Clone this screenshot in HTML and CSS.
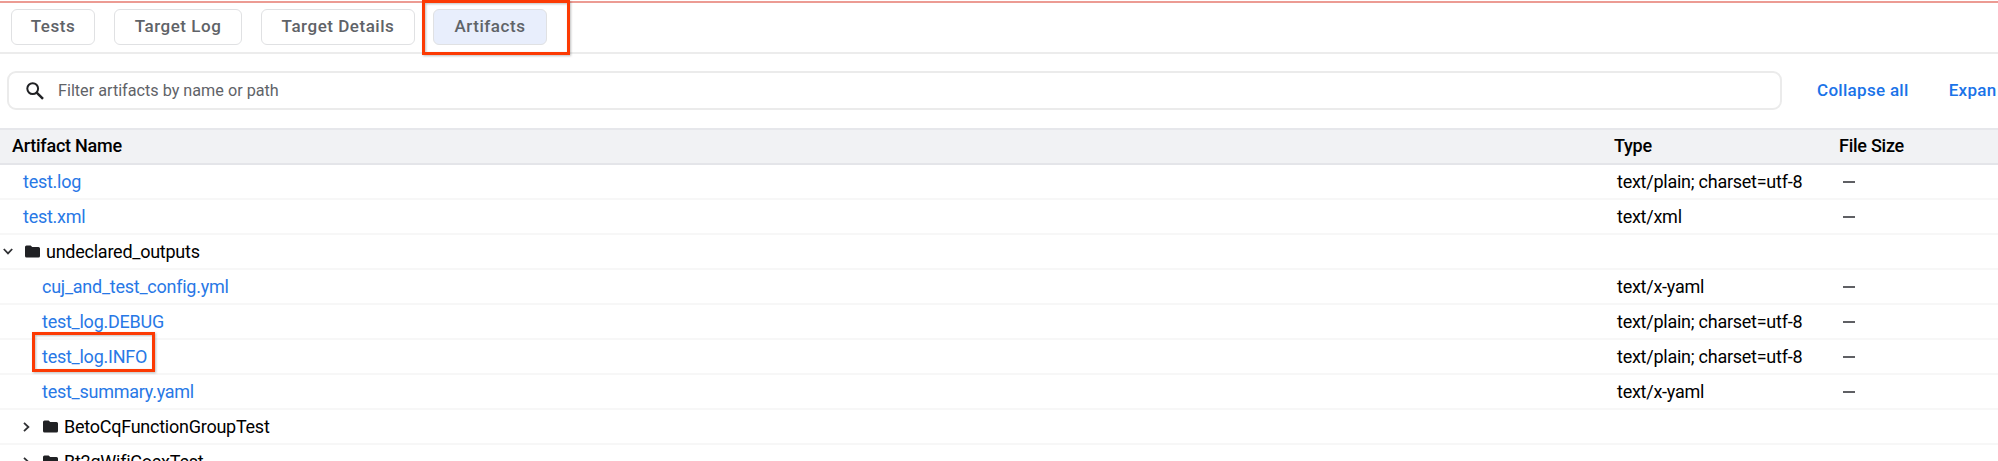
FILE: index.html
```html
<!DOCTYPE html>
<html lang="en">
<head>
<meta charset="utf-8">
<title>Artifacts</title>
<link rel="stylesheet" href="styles.css">
</head>
<body>
<svg class="defs" aria-hidden="true">
  <symbol id="folder" viewBox="0 0 15 13"><path d="M1.5 0.5H5.6L7.2 2H13.5Q15 2 15 3.5V11Q15 12.5 13.5 12.5H1.5Q0 12.5 0 11V2Q0 .5 1.5 .5Z" fill="#202124"/></symbol>
  <symbol id="down" viewBox="0 0 10 7"><path d="M.8 1L5 5.4L9.2 1" fill="none" stroke="#303134" stroke-width="1.8"/></symbol>
  <symbol id="right" viewBox="0 0 7 10"><path d="M1 .8L5.4 5L1 9.2" fill="none" stroke="#303134" stroke-width="1.8"/></symbol>
</svg>
<nav class="tabs">
  <button class="tab tests"><span>Tests</span></button>
  <button class="tab log"><span>Target Log</span></button>
  <button class="tab details"><span>Target Details</span></button>
  <button class="tab artifacts active"><span>Artifacts</span></button>
  <div class="mark mark-tab"></div>
</nav>
<div class="toolbar">
  <div class="search">
    <svg class="glass" viewBox="0 0 18 18"><circle cx="6.7" cy="6.6" r="5.4" fill="none" stroke="#202124" stroke-width="2"/><path d="M10.7 10.6L17 16.8" stroke="#202124" stroke-width="2.5"/></svg>
    <span class="placeholder">Filter artifacts by name or path</span>
  </div>
  <a class="action"><span>Collapse all</span></a>
  <a class="action expand"><span>Expan</span></a>
</div>
<main class="table">
  <div class="row head"><div class="name"><span>Artifact Name</span></div><div class="type"><span>Type</span></div><div class="size"><span>File Size</span></div></div>
  <div class="row"><div class="name file"><span>test.log</span></div><div class="type"><span>text/plain; charset=utf-8</span></div><div class="size"><i class="dash"></i></div></div>
  <div class="row"><div class="name file"><span>test.xml</span></div><div class="type"><span>text/xml</span></div><div class="size"><i class="dash"></i></div></div>
  <div class="row"><div class="name folder"><svg class="down"><use href="#down"/></svg><svg class="icon"><use href="#folder"/></svg><span>undeclared_outputs</span></div></div>
  <div class="row"><div class="name file nested"><span>cuj_and_test_config.yml</span></div><div class="type"><span>text/x-yaml</span></div><div class="size"><i class="dash"></i></div></div>
  <div class="row"><div class="name file nested"><span>test_log.DEBUG</span></div><div class="type"><span>text/plain; charset=utf-8</span></div><div class="size"><i class="dash"></i></div></div>
  <div class="row"><div class="name file nested"><span>test_log.INFO</span><div class="mark mark-file"></div></div><div class="type"><span>text/plain; charset=utf-8</span></div><div class="size"><i class="dash"></i></div></div>
  <div class="row"><div class="name file nested"><span>test_summary.yaml</span></div><div class="type"><span>text/x-yaml</span></div><div class="size"><i class="dash"></i></div></div>
  <div class="row"><div class="name folder nested"><svg class="right"><use href="#right"/></svg><svg class="icon"><use href="#folder"/></svg><span>BetoCqFunctionGroupTest</span></div></div>
  <div class="row"><div class="name folder nested"><svg class="right"><use href="#right"/></svg><svg class="icon"><use href="#folder"/></svg><span>Bt2gWifiCoexTest</span></div></div>
</main>
</body>
</html>
```
FILE: styles.css
```css
* { box-sizing: border-box; }
html { height: 461px; overflow: hidden; }
body { margin: 0; width: 1998px; height: 461px; overflow: hidden; background: #fff; font-family: Roboto, sans-serif; color: #000; }
.defs { display: none; }
.tabs { position: relative; display: flex; height: 54px; padding: 9px 0 0 11px; border-bottom: 2px solid #ececec; background: linear-gradient(#fff 1px, #ec9b93 1px, #ec9b93 3px, #fff 3px); }
.tab { height: 36px; padding: 0 0 2px; border: 1.5px solid #e0e1e3; border-radius: 6px; background: #fff; font: 500 17px/31px Roboto, sans-serif; letter-spacing: .53px; color: #5f6368; white-space: nowrap; }
.tests { width: 84px; margin-right: 19px; }
.log { width: 128px; margin-right: 19px; }
.details { width: 154px; margin-right: 18px; }
.artifacts { width: 114px; }
.active { background: #e8eefc; }
.mark { position: absolute; border: 3px solid #fc3a03; filter: drop-shadow(1px 1px 1px rgba(0,0,0,.25)); }
.mark-tab { left: 422px; top: 0; width: 148px; height: 55px; }
.toolbar { display: flex; align-items: center; height: 74px; padding: 0 0 1px 7px; overflow: hidden; }
.search { display: flex; flex: none; align-items: center; width: 1775px; height: 39px; padding-left: 17px; border: 2px solid #ebebeb; border-radius: 9px; }
.glass { width: 18px; height: 18px; margin-right: 14px; }
.placeholder { font-size: 16.2px; color: #5f6368; }
.action { flex: none; margin-left: 35px; padding-bottom: 1px; font-weight: 500; font-size: 17px; letter-spacing: .3px; color: #1a73e8; white-space: nowrap; }
.expand { margin-left: 40px; }
.row { display: grid; grid-template-columns: 1617px 222px 1fr; height: 35px; align-items: center; border-bottom: 2px solid #f7f7f7; font-size: 18px; letter-spacing: -.25px; white-space: nowrap; }
.head { height: 37px; grid-template-columns: 1614px 225px 1fr; padding: 0 0 2px; border-top: 2px solid #e6e7eb; border-bottom-color: #e4e5e9; background: #f1f2f4; font-weight: 500; }
.name { position: relative; display: flex; align-items: center; padding-left: 12px; }
.file { padding-left: 23px; color: #2878e6; }
.file.nested { padding-left: 42px; }
.folder { padding-left: 3px; }
.folder.nested { padding-left: 23px; }
.down { width: 10px; height: 7px; margin-right: 12px; }
.right { width: 7px; height: 10px; margin-right: 13px; }
.icon { width: 15px; height: 13px; margin-right: 6px; }
.dash { display: block; width: 12px; height: 2px; margin-left: 4px; background: #5f6064; }
.mark-file { left: 32px; top: -14px; width: 123px; height: 40px; }
```
